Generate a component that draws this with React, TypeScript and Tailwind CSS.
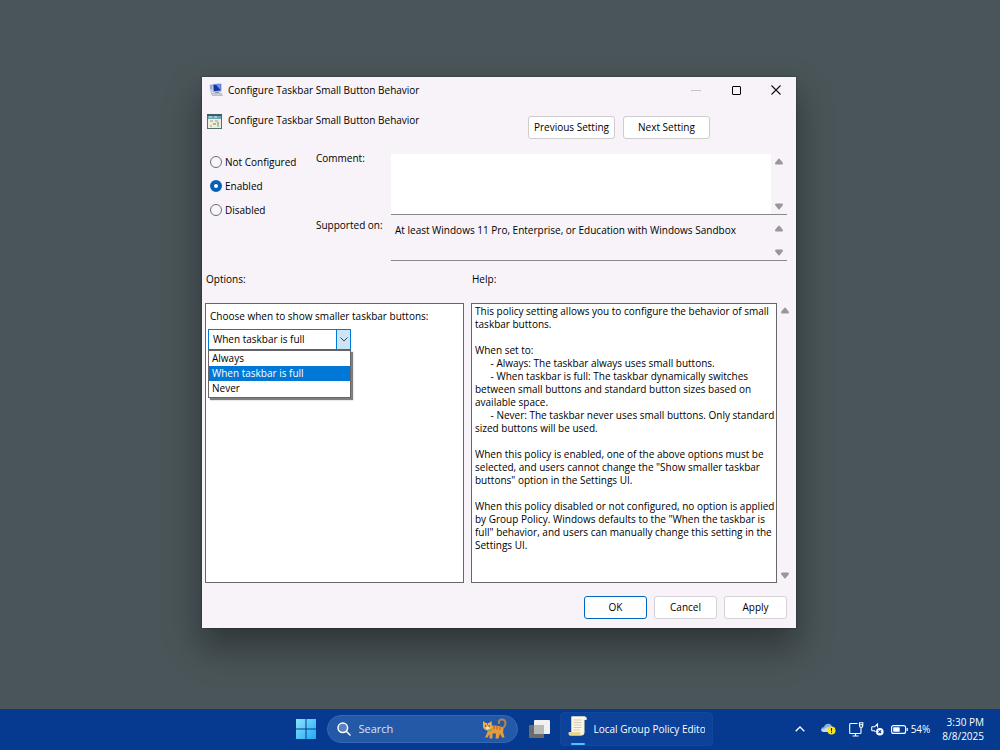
import { useState } from 'react';
import type { ReactNode } from 'react';

const OPTIONS = ['Always', 'When taskbar is full', 'Never'];

const STATES = ['Not Configured', 'Enabled', 'Disabled'];

const HELP_TEXT = `This policy setting allows you to configure the behavior of small
taskbar buttons.

When set to:
      - Always: The taskbar always uses small buttons.
      - When taskbar is full: The taskbar dynamically switches
between small buttons and standard button sizes based on
available space.
      - Never: The taskbar never uses small buttons. Only standard
sized buttons will be used.

When this policy is enabled, one of the above options must be
selected, and users cannot change the "Show smaller taskbar
buttons" option in the Settings UI.

When this policy disabled or not configured, no option is applied
by Group Policy. Windows defaults to the "When the taskbar is
full" behavior, and users can manually change this setting in the
Settings UI.`;

function ScrollArrows() {
  return (
    <div className="flex w-4 shrink-0 flex-col items-center justify-between py-1" aria-hidden="true">
      <svg width="8" height="7" viewBox="0 0 8 7" fill="#9a979b">
        <path d="M3.2 1 Q4 0 4.8 1 L8 5 Q8 6.5 7 6.5 H1 Q0 6.5 0 5 Z" />
      </svg>
      <svg width="8" height="7" viewBox="0 0 8 7" fill="#9a979b">
        <path d="M3.2 6 Q4 7 4.8 6 L8 2 Q8 0.5 7 0.5 H1 Q0 0.5 0 2 Z" />
      </svg>
    </div>
  );
}

function DialogButton({ children, className }: { children: ReactNode; className: string }) {
  return (
    <button type="button" className={`h-[23px] rounded-[3px] border bg-white leading-[15px] whitespace-nowrap ${className}`}>
      {children}
    </button>
  );
}

function PolicyDialog() {
  const [state, setState] = useState('Enabled');
  const [option, setOption] = useState('When taskbar is full');

  return (
    <section
      aria-label="Configure Taskbar Small Button Behavior"
      className="flex w-full max-w-[594px] flex-col bg-[#f7f3f8] text-[10px] leading-4 text-black shadow-[0_0_2px_rgba(0,0,0,0.4),0_18px_32px_2px_rgba(0,0,0,0.36)]"
    >
      {/* Title bar */}
      <header className="flex h-[26px] items-center pl-[7px]">
        <MonitorIcon />
        <h1 className="ml-[5px] flex-1">Configure Taskbar Small Button Behavior</h1>
        <button type="button" aria-label="Minimize" className="flex h-full w-10 items-center justify-center">
          <span className="h-px w-[10px] bg-[#c6c2c7]" />
        </button>
        <button type="button" aria-label="Maximize" className="flex h-full w-10 items-center justify-center">
          <span className="size-[9px] rounded-[1px] border border-black" />
        </button>
        <button type="button" aria-label="Close" className="flex h-full w-10 items-center justify-center">
          <svg width="10" height="10" viewBox="0 0 10 10" stroke="#111" strokeWidth="1.1">
            <path d="M0.5 0.5 L9.5 9.5 M9.5 0.5 L0.5 9.5" />
          </svg>
        </button>
      </header>

      {/* Setting name and navigation */}
      <div className="flex items-start pt-[9px] pr-[86px] pl-[5px]">
        <SettingIcon />
        <h2 className="ml-[6px] flex-1">Configure Taskbar Small Button Behavior</h2>
        <div className="mt-1 flex gap-2">
          <DialogButton className="w-[87px] border-[#cfccd0]">Previous Setting</DialogButton>
          <DialogButton className="w-[87px] border-[#cfccd0]">Next Setting</DialogButton>
        </div>
      </div>

      <div className="flex pt-[15px] pr-[9px] pl-2">
        <fieldset className="flex w-[106px] flex-col gap-2">
          {STATES.map((name) => (
            <label key={name} className="flex h-4 items-center gap-[3px]">
              <input
                type="radio"
                name="state"
                checked={state === name}
                onChange={() => setState(name)}
                className="size-3 appearance-none rounded-full border border-[#6f6c70] bg-[#f7f5f8] checked:border-4 checked:border-[#0560b6] checked:bg-white"
              />
              {name}
            </label>
          ))}
        </fieldset>

        <div className="grid flex-1 grid-cols-[75px_1fr] gap-y-[6px]">
          <label htmlFor="comment" className="-mt-1">
            Comment:
          </label>
          <div className="flex h-[61px] border-b border-[#8b888c]">
            <textarea id="comment" className="flex-1 resize-none bg-white p-1 outline-none" />
            <ScrollArrows />
          </div>
          <label htmlFor="supported" className="-mt-1">
            Supported on:
          </label>
          <div className="flex h-10 border-b border-[#8b888c]">
            <textarea
              id="supported"
              readOnly
              value="At least Windows 11 Pro, Enterprise, or Education with Windows Sandbox"
              className="flex-1 resize-none overflow-hidden bg-transparent p-1 pt-px outline-none"
            />
            <ScrollArrows />
          </div>
        </div>
      </div>

      <div className="grid grid-cols-[259px_1fr] gap-x-[7px] px-[3px] pt-[10px]">
        <h3 className="pl-px">Options:</h3>
        <h3 className="pl-px">Help:</h3>

        <div className="mt-4 border border-[#68666a] bg-white px-[2px] pt-1">
          <label htmlFor="when" className="block pl-[2px]">
            Choose when to show smaller taskbar buttons:
          </label>
          <div className="relative mt-[5px] w-[143px]">
            <select
              id="when"
              value={option}
              onChange={(e) => setOption(e.target.value)}
              className="block h-[21px] w-full appearance-none border border-[#0078d7] bg-white pb-[2px] pl-1 outline-none"
            >
              {OPTIONS.map((name) => (
                <option key={name}>{name}</option>
              ))}
            </select>
            <span className="pointer-events-none absolute inset-y-0 right-0 flex w-[15px] items-center justify-center border border-[#0078d7] bg-[#cce4f7]">
              <svg width="8" height="5" viewBox="0 0 8 5" fill="none" stroke="#444" strokeWidth="1">
                <path d="M0.5 0.5 L4 4 L7.5 0.5" />
              </svg>
            </span>
            <ul
              role="listbox"
              aria-label="Taskbar button size"
              className="absolute top-[21px] left-0 w-full border border-[#68666a] bg-white pb-px leading-[15px] shadow-[2px_2px_1px_rgba(0,0,0,0.5)]"
            >
              {OPTIONS.map((name) => (
                <li
                  key={name}
                  role="option"
                  aria-selected={option === name}
                  onClick={() => setOption(name)}
                  className={option === name ? 'bg-[#0078d7] pl-[3px] text-white' : 'pl-[3px]'}
                >
                  {name}
                </li>
              ))}
            </ul>
          </div>
        </div>

        <div className="mt-4 flex h-[280px]">
          <div className="flex-1 border border-[#68666a] bg-white pt-px pl-[3px] leading-[13px] whitespace-pre">
            {HELP_TEXT}
          </div>
          <ScrollArrows />
        </div>
      </div>

      <footer className="flex justify-end gap-[7px] pt-[13px] pr-[9px] pb-[9px]">
        <DialogButton className="w-[63px] border-[#0067c0]">OK</DialogButton>
        <DialogButton className="w-[63px] border-[#d6d3d7]">Cancel</DialogButton>
        <DialogButton className="w-[63px] border-[#d6d3d7]">Apply</DialogButton>
      </footer>
    </section>
  );
}

function MonitorIcon() {
  return (
    <svg width="14" height="14" viewBox="0 0 14 14" className="shrink-0" aria-hidden="true">
      <path d="M0.5 1.5 L4 1 V9 L1 9.5 Z" fill="#c3cfe4" />
      <path d="M1 3 H3 M1 5 H3" stroke="#6d83b3" />
      <path d="M3.5 1 L12.5 0.5 V8.5 L4 9 Z" fill="#8ea6d8" />
      <path d="M4.5 2 L11.5 1.5 V7.5 L5 8 Z" fill="#1534a8" />
      <path d="M7 1.8 L11.5 1.5 V7 Z" fill="#6d9af2" />
      <path d="M6 9 H10 V10.5 H6 Z" fill="#8790a6" />
      <path d="M2 10 L12 10 L13.5 12.5 H3.5 Z" fill="#c9ced9" stroke="#949bab" strokeWidth="0.5" />
    </svg>
  );
}

function SettingIcon() {
  return (
    <svg width="15" height="15" viewBox="0 0 15 15" className="mt-[2px] shrink-0" aria-hidden="true">
      <rect x="0.5" y="0.5" width="14" height="14" fill="#eceee0" stroke="#55706f" />
      <path d="M0 0 H15 V2 H0 Z" fill="#3c5d63" />
      <path d="M1 2 H14 V5 H1 Z" fill="#69a7b8" />
      <path d="M2 3 H5 M7 3 H10" stroke="#d9eef2" />
      <path d="M3 7 H6 M3 12 H5" stroke="#b79a3d" />
      <path d="M6 10 H9 M11 8 V11" stroke="#5b8c52" />
      <path d="M8 7 H11 M10 12 H12" stroke="#8f9a94" />
    </svg>
  );
}

function CatIcon() {
  return (
    <svg width="25" height="22" viewBox="0 0 25 22" aria-hidden="true">
      <path d="M19 11 Q23.5 9 23.5 5 Q23 1 19.5 1.5 Q16.5 2 17 5" fill="none" stroke="#b98443" strokeWidth="2" strokeLinecap="round" />
      <path d="M6 8 Q13 7 19 8.5 Q22.5 10 21 14 L22.5 19.5 H20 L18 15.5 L16.5 20.5 H13.5 L14 15.5 H10.5 L10.5 20.5 H7.5 L7.5 16 L5.5 19.5 H3 L5.5 14 Z" fill="#e79b3f" />
      <path d="M1 3 L3.5 5 H7 L9.5 3 L10 9 Q9 12.5 5.5 12.5 Q1.5 12 1 8.5 Z" fill="#edae5d" />
      <path d="M12 8 V11 M15 8 V11.5 M18 9 V12 M5.5 5 V7" stroke="#a7631f" strokeWidth="1" />
      <path d="M3.5 9.5 Q5.5 8 7.5 9.5 Q6.5 12 5 11.5 Z" fill="#f9e3bc" />
      <circle cx="3.5" cy="8" r="0.7" fill="#3c2a18" />
      <circle cx="7.2" cy="8" r="0.7" fill="#3c2a18" />
      <path d="M6 13 L10 11.5" stroke="#4fa36f" strokeWidth="1.3" />
    </svg>
  );
}

function ScrollIcon() {
  return (
    <svg width="20" height="20" viewBox="0 0 20 20" aria-hidden="true">
      <path d="M3.5 0.5 H17 Q19.5 1 18.5 4 H16.5 V17 Q16 19.5 13.5 19.5 H2 Q0 19 1 16 H3.5 Z" fill="#f8f1d2" />
      <path d="M3.5 0.5 H17 Q15.5 1 15.5 4 V16 H3.5 Z" fill="#fcf8e4" />
      <path d="M1 16 H12 Q12 19.5 14 19.5 H2 Q0 19 1 16 Z" fill="#e9d68f" />
      <path d="M5.5 4 H13.5 M5.5 6.5 H13.5 M5.5 9 H13.5 M5.5 11.5 H13.5 M5.5 14 H12" stroke="#c9c4b2" strokeWidth="0.9" />
    </svg>
  );
}

function TrayIcons() {
  return (
    <div className="flex items-center">
      <button type="button" aria-label="Show hidden icons">
        <svg width="10" height="6" viewBox="0 0 10 6" fill="none" stroke="#fff" strokeWidth="1.3">
          <path d="M0.7 5.3 L5 1 L9.3 5.3" />
        </svg>
      </button>
      <button type="button" aria-label="OneDrive" className="ml-4">
        <svg width="15" height="12" viewBox="0 0 15 12">
          <path d="M3 9 Q0 9 0 6.5 Q0.3 4 3 4 Q4.5 0.5 7.5 0.8 Q10.5 1 11 4 L11 9 Z" fill="#8fb3da" />
          <path d="M3 9 Q1 9 0.5 7 L7 4 L10 6 V9 Z" fill="#c8d9ee" />
          <circle cx="10.5" cy="7.5" r="4" fill="#f8e71c" />
          <path d="M10.5 5 V8 M10.5 8.8 V10" stroke="#222" strokeWidth="1.1" />
        </svg>
      </button>
      <button type="button" aria-label="Network" className="ml-[13px]">
        <svg width="15" height="15" viewBox="0 0 15 15" fill="none" stroke="#fff" strokeWidth="1.1">
          <path d="M8.5 1.5 H1.5 Q0.7 1.5 0.7 2.5 V10.5 Q0.7 11.5 1.5 11.5 H11 Q12 11.5 12 10.5 V6" />
          <path d="M3.5 14 H9.5 M6.5 11.5 V14" />
          <path d="M10.5 0.7 H13.8 V3.5 Q13.8 5.5 12.2 5.5 Q10.5 5.5 10.5 3.5 Z M10.5 2.7 H13.8" />
        </svg>
      </button>
      <button type="button" aria-label="Volume muted" className="ml-[7px]">
        <svg width="13" height="13" viewBox="0 0 13 13" fill="none" stroke="#fff" strokeWidth="1.1">
          <path d="M6.5 4.5 V1 L3.5 3.8 H1.5 Q0.7 3.8 0.7 4.6 V7 Q0.7 7.8 1.5 7.8 H3.5 L4.5 8.8" />
          <circle cx="8.8" cy="8.8" r="3.8" fill="#fff" stroke="none" />
          <path d="M7.4 7.4 L10.2 10.2 M10.2 7.4 L7.4 10.2" stroke="#053a90" />
        </svg>
      </button>
      <button type="button" className="ml-[7px] flex items-center gap-[3px] text-[10px]">
        <svg width="17" height="9" viewBox="0 0 17 9" aria-hidden="true">
          <rect x="0.6" y="0.6" width="14" height="7.8" rx="2" fill="none" stroke="#fff" strokeWidth="1.1" />
          <rect x="2.2" y="2.2" width="6.5" height="4.6" rx="0.6" fill="#fff" />
          <path d="M16.2 3 V6" stroke="#fff" strokeWidth="1.2" />
        </svg>
        54%
      </button>
    </div>
  );
}

function Taskbar() {
  return (
    <footer className="grid h-[41px] grid-cols-[1fr_auto_1fr] items-center bg-[#053a90] pb-px text-white">
      <div />
      <nav className="flex items-center pl-2" aria-label="Taskbar">
        <button type="button" aria-label="Start">
          <svg width="20" height="20" viewBox="0 0 20 20">
            <defs>
              <linearGradient id="start" x1="0" y1="0" x2="1" y2="1">
                <stop offset="0" stopColor="#8be4fd" />
                <stop offset="1" stopColor="#1fa8f2" />
              </linearGradient>
            </defs>
            <path fill="url(#start)" d="M0 0h9.5v9.5H0z M10.5 0H20v9.5h-9.5z M0 10.5h9.5V20H0z M10.5 10.5H20V20h-9.5z" />
          </svg>
        </button>
        <label className="ml-[11px] flex h-7 w-[191px] items-center rounded-full border border-[#3568b4] bg-[#2459a8] pr-[10px] pl-[9px]">
          <svg width="14" height="14" viewBox="0 0 14 14" fill="none" stroke="#fff" strokeWidth="1.5" aria-hidden="true">
            <circle cx="5.8" cy="5.8" r="4.8" fill="#5b80bd" />
            <path d="M9.3 9.3 L13 13" strokeLinecap="round" />
          </svg>
          <input
            placeholder="Search"
            aria-label="Search"
            className="ml-2 w-0 flex-1 text-[11px] outline-none placeholder:text-[#dbe6f7]"
          />
          <CatIcon />
        </label>
        <button type="button" aria-label="Task view" className="ml-[11px]">
          <svg width="21" height="19" viewBox="0 0 21 19">
            <rect x="5" y="0" width="16" height="14" rx="1" fill="#f1f1f1" />
            <rect x="0" y="5" width="15" height="13" rx="1" fill="#6b6b6b" />
            <rect x="5" y="5" width="10" height="9" fill="#b9b9b9" />
          </svg>
        </button>
        <button
          type="button"
          className="ml-[10px] flex h-[34px] w-[153px] items-center rounded-[4px] border border-[#13479a] bg-[#0c429a] px-[7px] text-[10px]"
        >
          <span className="flex h-full flex-col items-center justify-between pt-[3px]">
            <ScrollIcon />
            <span className="h-[2px] w-[14px] rounded-full bg-[#4cc2ff]" />
          </span>
          <span className="ml-[6px] flex-1 overflow-hidden text-left font-medium whitespace-nowrap">Local Group Policy Editor</span>
        </button>
      </nav>
      <div className="flex items-center justify-end pr-4">
        <TrayIcons />
        <div className="ml-3 text-right text-[10px] leading-[14px]">
          <div>3:30 PM</div>
          <div>8/8/2025</div>
        </div>
      </div>
    </footer>
  );
}

export default function App() {
  return (
    <div className="flex min-h-screen flex-col bg-[#4a5559] font-['Open_Sans',sans-serif]">
      <main className="flex flex-1 items-center justify-center pr-[2px] pb-1">
        <PolicyDialog />
      </main>
      <Taskbar />
    </div>
  );
}
